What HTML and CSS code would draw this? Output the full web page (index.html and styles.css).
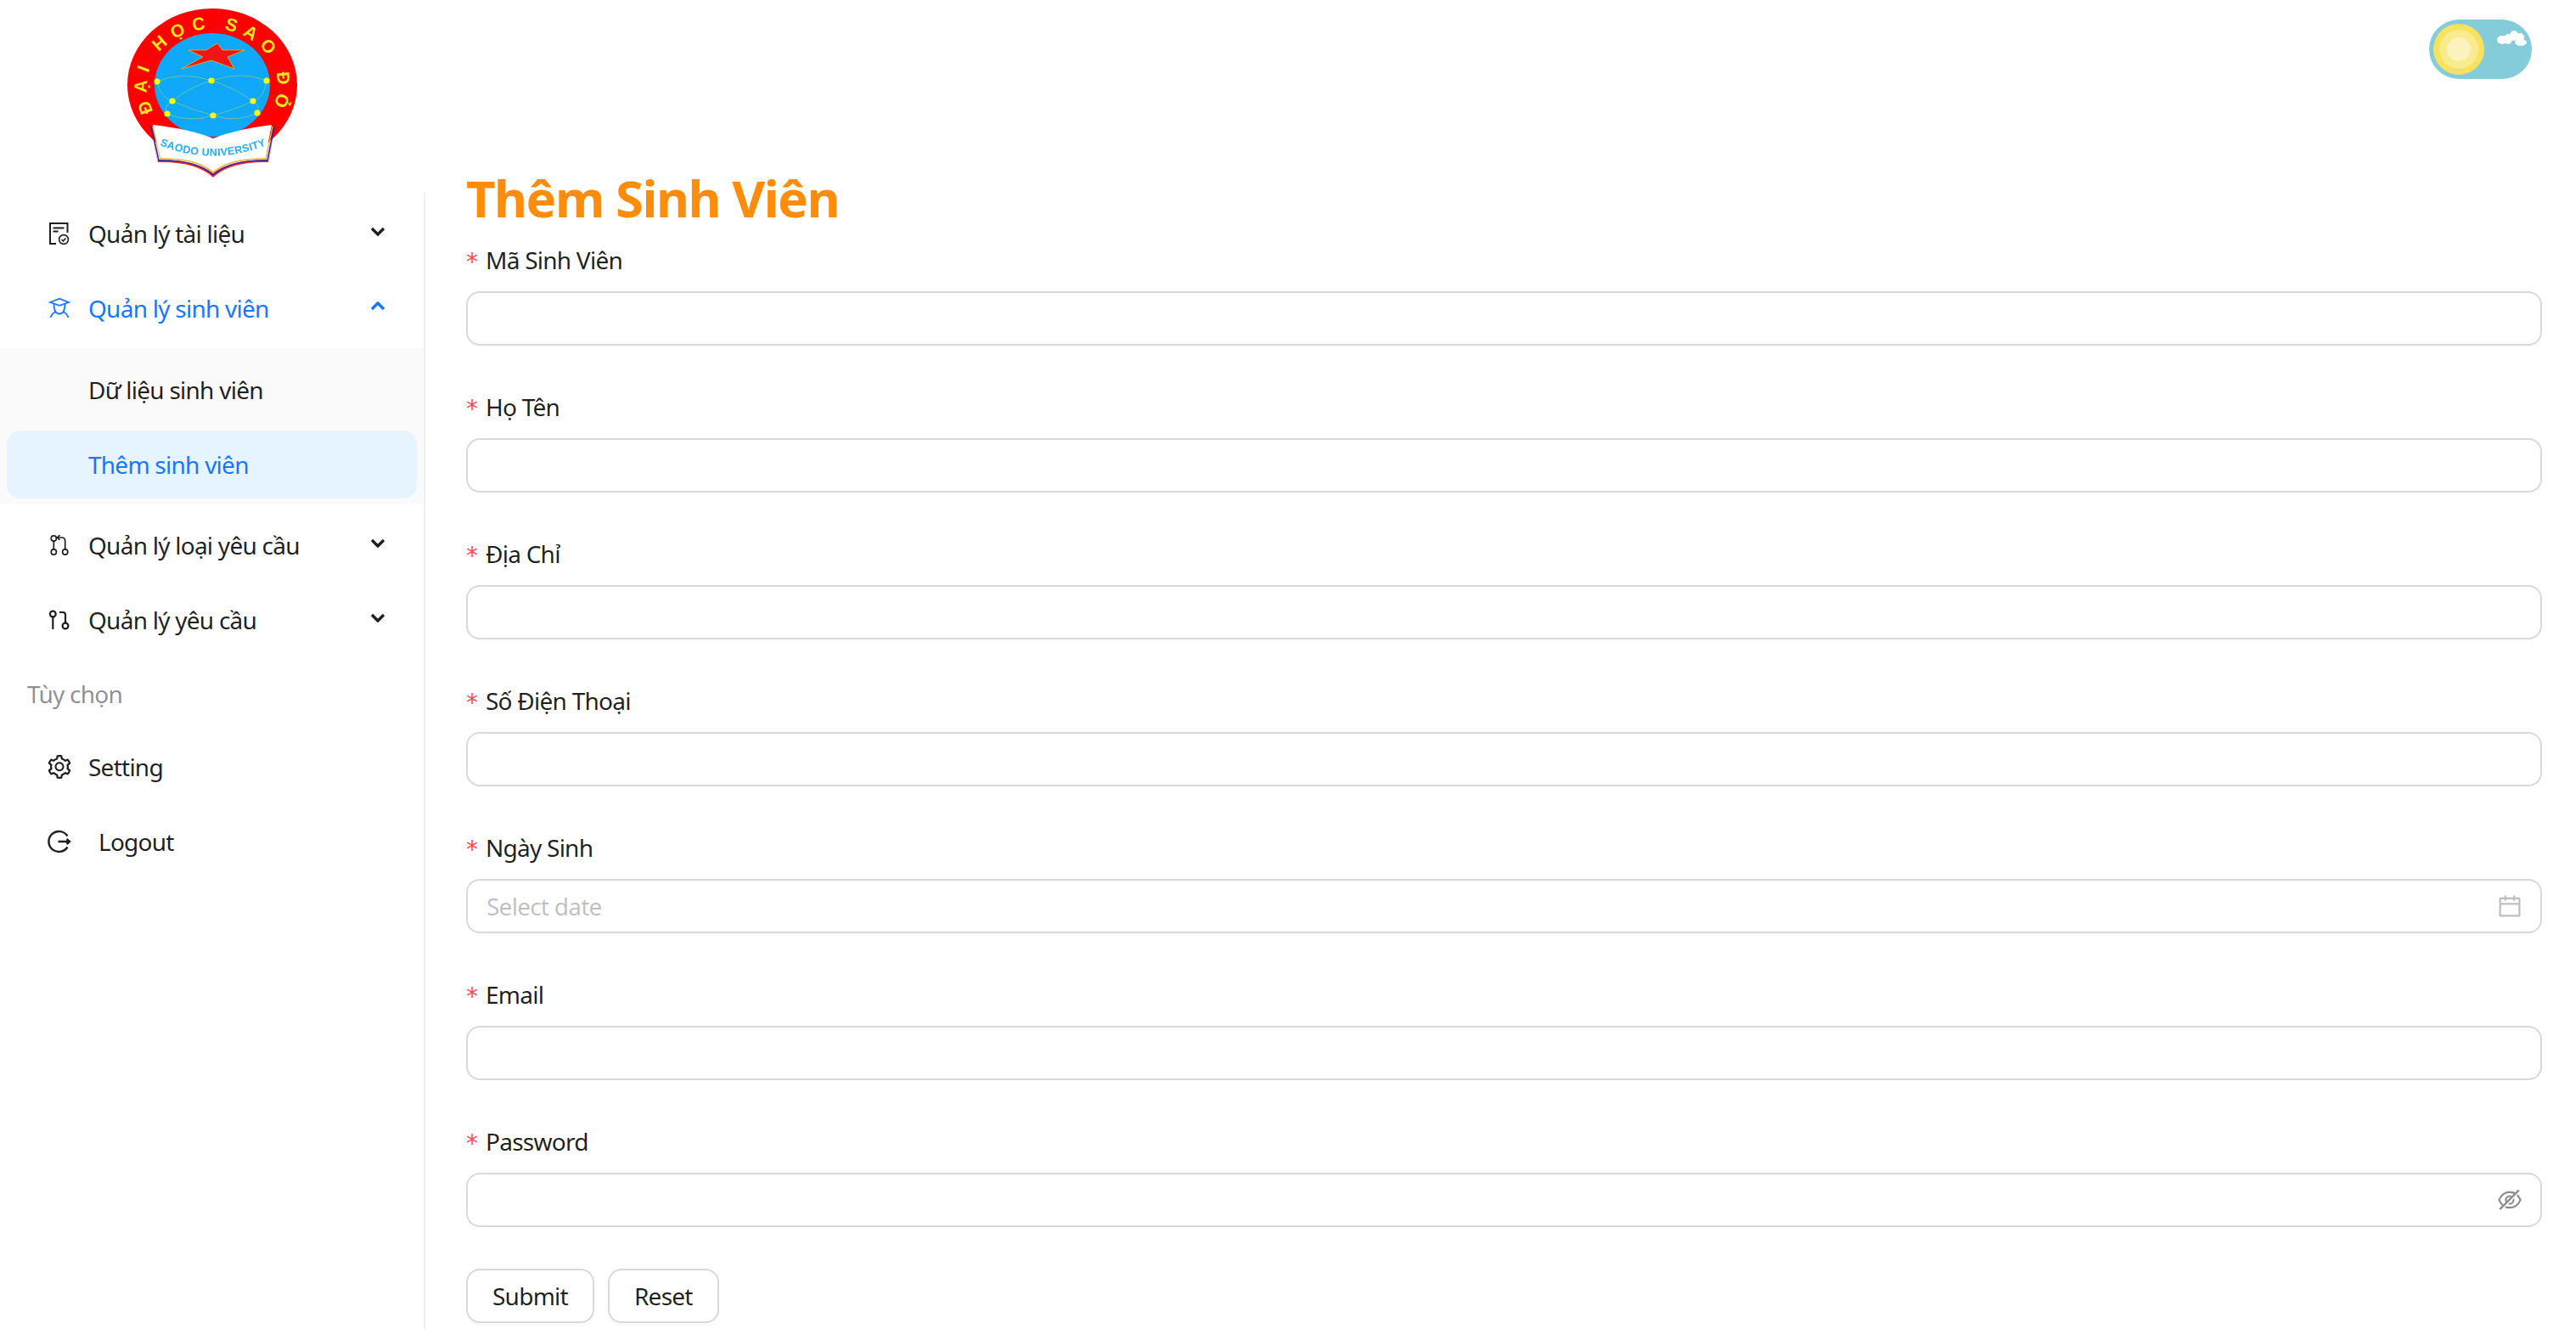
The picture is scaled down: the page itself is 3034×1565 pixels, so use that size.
FILE: index.html
```html
<!DOCTYPE html>
<html lang="en">
<head>
  <meta charset="UTF-8" />
  <title>Thêm Sinh Viên</title>
  <link rel="stylesheet" href="styles.css">
</head>
<body>

<div class="app">

  <!-- SIDEBAR -->
  <aside class="sidebar">
    <div class="logo-box">
      <svg class="logo" viewBox="150 8 204 204" width="204" height="204">
        <defs>
          <path id="ringPath" d="M184 134 A77 67 0 1 1 318 134" />
          <path id="bookPath" d="M189 171 Q252 196 315 171" />
        </defs>
        <ellipse cx="251" cy="100" rx="100" ry="90" fill="#ff0000" />
        <ellipse cx="251" cy="100" rx="68" ry="61" fill="#10a8fb" />
        <path d="M195 150 Q252 178 307 150 L252 168 Z" fill="#10a8fb" />
        <g fill="none" stroke="#6fcf9a" stroke-width="0.8">
          <path d="M186 96 Q215 83 250 95 Q285 83 315 95" />
          <path d="M186 96 Q190 115 204 119 Q228 130 252 136 Q276 130 299 119 Q312 115 315 95" />
          <path d="M250 95 Q225 102 204 119 Q192 126 198 134 Q225 145 252 136 Q280 145 304 133 Q308 126 299 119 Q275 102 250 95" />
        </g>
        <g fill="#ffff00">
          <circle cx="186" cy="96" r="3.6" />
          <circle cx="250" cy="95" r="3.6" />
          <circle cx="315" cy="95" r="3.6" />
          <circle cx="204" cy="119" r="3.6" />
          <circle cx="299" cy="119" r="3.6" />
          <circle cx="198" cy="134" r="3.6" />
          <circle cx="304" cy="133" r="3.6" />
          <circle cx="252" cy="136" r="3.6" />
        </g>
        <polygon points="257,51 263,59 289,59 269,67 277,81 250,71 215,81 240,67 223,59 244,59" fill="#f01414" stroke="#f5c518" stroke-width="0.7" />
        <text class="logo-ring"><textPath href="#ringPath" startOffset="50%" text-anchor="middle">ĐẠI HỌC SAO ĐỎ</textPath></text>
        <path d="M178 148 L187 191 Q232 190 252 209 Q272 190 317 191 L325 148 L318 188 Q272 188 252 204 Q232 188 186 188 Z" fill="#ff2a2a" />
        <path d="M179 149 L188 189 Q232 188 252 206 Q272 188 316 189 L324 149" fill="none" stroke="#2a2aa8" stroke-width="1.6" />
        <path d="M181 149 L190 187 Q232 186 252 203 Q272 186 314 187 L322 149" fill="none" stroke="#f0b030" stroke-width="1.4" />
        <path d="M181 147 Q225 152 252 163 Q280 152 321 147 L313 186 Q272 185 252 200 Q232 185 190 186 Z" fill="#ffffff" />
        <text class="logo-book"><textPath href="#bookPath" startOffset="50%" text-anchor="middle">SAODO UNIVERSITY</textPath></text>
      </svg>
    </div>

    <nav class="menu">
      <div class="menu-item">
        <svg class="menu-icon" viewBox="0 0 28 28" fill="none" stroke="currentColor" stroke-width="2">
          <path d="M10 26H3V2h20.5v11" />
          <path d="M6.5 7.5h13M6.5 11.5h6" />
          <circle cx="19" cy="21" r="5.4" stroke-width="1.6" />
          <path d="M16.6 21l1.8 2 3-3.6" stroke-width="1.6" />
        </svg>
        <span class="menu-text">Quản lý tài liệu</span>
        <svg class="chevron" viewBox="0 0 18 11" fill="none" stroke="currentColor" stroke-width="3.4"><path d="M2 2l7 7 7-7" /></svg>
      </div>

      <div class="menu-item open">
        <svg class="menu-icon" viewBox="0 0 28 28" fill="none" stroke="currentColor" stroke-width="1.8">
          <path d="M3 7l11-4.4L25 7l-11 3.8z" />
          <path d="M7.5 9c0 9 2.5 11.500 6.500 11.500S20.500 18 20.500 9" />
          <path d="M3.500 25c1-3.500 3-5.500 6-7M24.500 25c-1-3.500-3-5.500-6-7" />
        </svg>
        <span class="menu-text">Quản lý sinh viên</span>
        <svg class="chevron" viewBox="0 0 18 11" fill="none" stroke="currentColor" stroke-width="3.4"><path d="M2 9l7-7 7 7" /></svg>
      </div>

      <div class="submenu">
        <div class="menu-item sub">Dữ liệu sinh viên</div>
        <div class="menu-item sub active">Thêm sinh viên</div>
      </div>

      <div class="menu-item">
        <svg class="menu-icon" viewBox="0 0 28 28" fill="none" stroke="currentColor" stroke-width="1.700">
          <circle cx="7.300" cy="6" r="3.100" />
          <circle cx="7.300" cy="22" r="3.100" />
          <circle cx="20.700" cy="22" r="3.100" />
          <path d="M7.300 9v10M20.700 19V9q0-4-4-4h-5M14.500 2l-3 3 3 3" />
        </svg>
        <span class="menu-text">Quản lý loại yêu cầu</span>
        <svg class="chevron" viewBox="0 0 18 11" fill="none" stroke="currentColor" stroke-width="3.4"><path d="M2 2l7 7 7-7" /></svg>
      </div>

      <div class="menu-item">
        <svg class="menu-icon" viewBox="0 0 28 28" fill="none" stroke="currentColor" stroke-width="2.200">
          <circle cx="6.300" cy="7" r="3.400" />
          <path d="M6.300 10.500V25" />
          <circle cx="21" cy="21" r="3.400" />
          <path d="M21 17.500V8q0-3-3-3h-4" />
        </svg>
        <span class="menu-text">Quản lý yêu cầu</span>
        <svg class="chevron" viewBox="0 0 18 11" fill="none" stroke="currentColor" stroke-width="3.4"><path d="M2 2l7 7 7-7" /></svg>
      </div>

      <div class="menu-title">Tùy chọn</div>

      <div class="menu-item">
        <svg class="menu-icon" viewBox="64 64 896 896" fill="currentColor">
          <path d="M924.8 625.7l-65.5-56c3.1-19 4.7-38.4 4.7-57.8s-1.6-38.8-4.7-57.8l65.5-56a32.03 32.03 0 0 0 9.3-35.2l-.9-2.6a443.74 443.74 0 0 0-79.7-137.9l-1.8-2.1a32.12 32.12 0 0 0-35.1-9.5l-81.3 28.9c-30-24.6-63.5-44-99.7-57.6l-15.7-85a32.05 32.05 0 0 0-25.8-25.7l-2.7-.5c-52.1-9.4-106.9-9.4-159 0l-2.7.5a32.05 32.05 0 0 0-25.8 25.7l-15.8 85.4a351.86 351.86 0 0 0-99 57.4l-81.9-29.1a32 32 0 0 0-35.1 9.5l-1.8 2.1a446.02 446.02 0 0 0-79.7 137.9l-.9 2.6c-4.5 12.5-.8 26.5 9.3 35.2l66.3 56.6c-3.1 18.8-4.6 38-4.6 57.1 0 19.2 1.5 38.4 4.6 57.1L99 625.5a32.03 32.03 0 0 0-9.3 35.2l.9 2.6c18.1 50.4 44.9 96.9 79.7 137.9l1.8 2.1a32.12 32.12 0 0 0 35.1 9.5l81.9-29.1c29.8 24.5 63.1 43.9 99 57.4l15.8 85.4a32.05 32.05 0 0 0 25.8 25.7l2.7.5a449.4 449.4 0 0 0 159 0l2.7-.5a32.05 32.05 0 0 0 25.8-25.7l15.7-85a350 350 0 0 0 99.7-57.6l81.3 28.9a32 32 0 0 0 35.1-9.5l1.8-2.1c34.8-41.1 61.6-87.5 79.7-137.9l.9-2.6c4.5-12.3.8-26.3-9.3-35zM788.3 465.9c2.5 15.1 3.8 30.6 3.8 46.1s-1.3 31-3.8 46.1l-6.6 40.1 74.7 63.9a370.03 370.03 0 0 1-42.6 73.6L721 702.8l-31.4 25.8c-23.9 19.6-50.5 35-79.3 45.8l-38.1 14.3-17.9 97a377.5 377.5 0 0 1-85 0l-17.9-97.2-37.8-14.5c-28.5-10.8-55-26.2-78.7-45.7l-31.4-25.9-93.4 33.2c-17-22.9-31.2-47.6-42.6-73.6l75.5-64.5-6.5-40c-2.4-14.9-3.7-30.3-3.7-45.5 0-15.3 1.2-30.6 3.7-45.5l6.5-40-75.5-64.5c11.3-26.1 25.6-50.7 42.6-73.6l93.4 33.2 31.4-25.9c23.7-19.5 50.2-34.9 78.7-45.7l37.9-14.3 17.9-97.2c28.1-3.2 56.8-3.2 85 0l17.9 97 38.1 14.3c28.7 10.8 55.4 26.2 79.3 45.8l31.4 25.8 92.8-32.9c17 22.9 31.2 47.6 42.6 73.6L781.8 426l6.5 39.9zM512 326c-97.2 0-176 78.8-176 176s78.8 176 176 176 176-78.8 176-176-78.8-176-176-176zm79.2 255.2A111.6 111.6 0 0 1 512 614c-29.9 0-58-11.7-79.2-32.8A111.6 111.6 0 0 1 400 502c0-29.9 11.7-58 32.8-79.2C454 401.6 482.1 390 512 390c29.9 0 58 11.6 79.2 32.8A111.6 111.6 0 0 1 624 502c0 29.9-11.7 58-32.8 79.2z" />
        </svg>
        <span class="menu-text">Setting</span>
      </div>

      <div class="menu-item">
        <svg class="menu-icon" viewBox="0 0 28 28" fill="none" stroke="currentColor" stroke-width="2.400">
          <path d="M23.500 7.500A12 12 0 1 0 23.500 20.500" />
          <path d="M12.500 14H26M22.500 11l3.500 3-3.500 3" />
        </svg>
        <span class="menu-text logout">Logout</span>
      </div>
    </nav>
  </aside>

  <!-- MAIN -->
  <main class="content">
    <div class="topbar">
      <svg class="theme-toggle" viewBox="0 0 121 70" width="121" height="70">
        <rect width="121" height="70" rx="35" fill="#84ccda" />
        <circle cx="35" cy="35" r="30" fill="#fae15e" />
        <circle cx="35" cy="35" r="23" fill="#f8ec8f" />
        <circle cx="35" cy="35" r="14" fill="#fdf3bf" />
        <g fill="#ffffff">
          <ellipse cx="86" cy="24" rx="6" ry="5" />
          <ellipse cx="93" cy="23" rx="5" ry="6" />
          <ellipse cx="100" cy="19" rx="5" ry="6" />
          <ellipse cx="107" cy="21" rx="5" ry="5" />
          <ellipse cx="108" cy="27" rx="7" ry="4" />
        </g>
      </svg>
    </div>

    <h1 class="page-title">Thêm Sinh Viên</h1>

    <form class="student-form">
      <div class="form-item">
        <label class="form-label"><span class="req">*</span>Mã Sinh Viên</label>
        <div class="input-box"><input type="text" /></div>
      </div>
      <div class="form-item">
        <label class="form-label"><span class="req">*</span>Họ Tên</label>
        <div class="input-box"><input type="text" /></div>
      </div>
      <div class="form-item">
        <label class="form-label"><span class="req">*</span>Địa Chỉ</label>
        <div class="input-box"><input type="text" /></div>
      </div>
      <div class="form-item">
        <label class="form-label"><span class="req">*</span>Số Điện Thoại</label>
        <div class="input-box"><input type="text" /></div>
      </div>
      <div class="form-item">
        <label class="form-label"><span class="req">*</span>Ngày Sinh</label>
        <div class="input-box">
          <input type="text" placeholder="Select date" />
          <svg class="input-icon calendar" viewBox="64 64 896 896" fill="currentColor">
            <path d="M880 184H712v-64c0-4.4-3.6-8-8-8h-56c-4.4 0-8 3.6-8 8v64H384v-64c0-4.4-3.6-8-8-8h-56c-4.4 0-8 3.6-8 8v64H144c-17.7 0-32 14.3-32 32v664c0 17.7 14.3 32 32 32h736c17.7 0 32-14.3 32-32V216c0-17.7-14.3-32-32-32zm-40 656H184V460h656v380zM184 392V256h128v48c0 4.4 3.6 8 8 8h56c4.4 0 8-3.6 8-8v-48h256v48c0 4.4 3.6 8 8 8h56c4.4 0 8-3.6 8-8v-48h128v136H184z" />
          </svg>
        </div>
      </div>
      <div class="form-item">
        <label class="form-label"><span class="req">*</span>Email</label>
        <div class="input-box"><input type="text" /></div>
      </div>
      <div class="form-item">
        <label class="form-label"><span class="req">*</span>Password</label>
        <div class="input-box">
          <input type="password" />
          <svg class="input-icon eye" viewBox="64 64 896 896" fill="currentColor">
            <path d="M942.2 486.2Q889.47 375.11 816.7 305l-50.88 50.88C807.31 395.53 843.45 447.4 874.7 512 791.5 684.2 673.4 766 512 766q-72.67 0-133.87-22.38L323 798.75Q408 838 512 838q288.3 0 430.2-300.3a60.29 60.29 0 0 0 0-51.5zm-63.57-320.64L836 122.88a8 8 0 0 0-11.32 0L715.31 232.2Q624.86 186 512 186q-288.3 0-430.2 300.3a60.3 60.3 0 0 0 0 51.5q56.69 119.4 136.5 191.41L112.48 835a8 8 0 0 0 0 11.31L155.17 889a8 8 0 0 0 11.31 0l712.15-712.12a8 8 0 0 0 0-11.32zM149.3 512C232.6 339.8 350.7 258 512 258c54.54 0 104.13 9.36 149.12 28.39l-70.3 70.3a176 176 0 0 0-238.13 238.13l-83.42 83.42C223.1 637.49 183.3 582.28 149.3 512zm246.7 0a112.11 112.11 0 0 1 146.2-106.69L401.31 546.2A112 112 0 0 1 396 512z" />
            <path d="M508 624c-3.46 0-6.87-.16-10.25-.47l-52.82 52.82a176.09 176.09 0 0 0 227.42-227.42l-52.82 52.82c.31 3.38.47 6.79.47 10.25a111.94 111.94 0 0 1-112 112z" />
          </svg>
        </div>
      </div>

      <div class="form-buttons">
        <button type="button" class="btn btn-submit">Submit</button>
        <button type="reset" class="btn btn-reset">Reset</button>
      </div>
    </form>
  </main>

</div>

</body>
</html>
```

FILE: styles.css
```css
* {
  margin: 0;
  padding: 0;
  box-sizing: border-box;
}

body {
  font-family: "Noto Sans", "Open Sans", sans-serif;
  font-size: 28px;
  letter-spacing: -0.75px;
  color: rgba(0, 0, 0, 0.88);
  background: #fff;
  height: 100vh;
  overflow: hidden;
}

.app {
  display: flex;
  height: 100%;
}

/* Sidebar */
.sidebar {
  width: 501px;
  flex-shrink: 0;
  display: flex;
  flex-direction: column;
}

.logo-box {
  height: 226px;
  display: flex;
  justify-content: center;
  padding-top: 8px;
}

.logo {
  display: block;
  filter: blur(0.4px);
}

.logo-ring {
  font-family: "Liberation Sans", sans-serif;
  font-weight: bold;
  font-size: 21px;
  letter-spacing: 8px;
  fill: #ffe81a;
}

.logo-book {
  font-family: "Liberation Sans", sans-serif;
  font-weight: bold;
  font-size: 12.5px;
  letter-spacing: 0.3px;
  fill: #25aef5;
}

.menu {
  flex: 1;
  border-right: 2px solid #f0f0f0;
  padding-top: 9px;
}

.menu-item {
  height: 80px;
  display: flex;
  align-items: center;
  padding: 0 37px 0 56px;
  margin: 0 8px 8px 0;
  white-space: nowrap;
}

.menu-item.open {
  color: #1677ff;
  margin-bottom: 7px;
}

.menu-icon {
  width: 28px;
  height: 28px;
  flex-shrink: 0;
  margin-right: 20px;
}

.menu-text {
  flex: 1;
}

.menu-text.logout {
  margin-left: 12px;
}

.chevron {
  width: 18px;
  height: 11px;
  flex-shrink: 0;
  margin-top: -6px;
}

.submenu {
  background: #fafafa;
  padding: 9px 0 7px;
  margin-bottom: 8px;
}

.menu-item.sub {
  padding-left: 96px;
  margin-left: 8px;
}

.menu-item.sub:last-child {
  margin-bottom: 0;
}

.menu-item.active {
  background: #e6f4ff;
  color: #1677ff;
  border-radius: 16px;
}

.menu-title {
  height: 78px;
  line-height: 78px;
  padding-left: 32px;
  color: rgba(0, 0, 0, 0.45);
  margin-bottom: 7px;
}

/* Main area */
.content {
  flex: 1;
  padding: 0 40px 0 48px;
}

.topbar {
  display: flex;
  justify-content: flex-end;
  padding: 23px 12px 0 0;
}

.theme-toggle {
  display: block;
}

.page-title {
  font-size: 60px;
  line-height: 80px;
  font-weight: 700;
  letter-spacing: -1.5px;
  color: #ff8c0a;
  margin-top: 100px;
  margin-bottom: 11px;
}

.form-item {
  margin-bottom: 50px;
}

.form-label {
  display: flex;
  align-items: center;
  height: 44px;
  margin-bottom: 15px;
}

.req {
  width: 23px;
  flex-shrink: 0;
  font-family: "DejaVu Sans", sans-serif;
  font-size: 28px;
  line-height: 44px;
  padding-top: 6px;
  color: #ff4d4f;
}

.input-box {
  height: 64px;
  border: 2px solid #d9d9d9;
  border-radius: 16px;
  display: flex;
  align-items: center;
  padding: 0 22px;
  background: #fff;
}

.input-box input {
  flex: 1;
  border: none;
  outline: none;
  background: none;
  font: inherit;
  letter-spacing: inherit;
  color: inherit;
}

.input-box input::placeholder {
  color: rgba(0, 0, 0, 0.25);
}

.input-icon {
  width: 28px;
  height: 28px;
  flex-shrink: 0;
}

.input-icon.calendar {
  color: rgba(0, 0, 0, 0.25);
}

.input-icon.eye {
  color: rgba(0, 0, 0, 0.45);
}

.form-buttons {
  display: flex;
  gap: 16px;
  margin-top: -1px;
}

.btn {
  height: 64px;
  padding: 0 29px;
  border: 2px solid #d9d9d9;
  border-radius: 16px;
  background: #fff;
  font: inherit;
  letter-spacing: inherit;
  color: inherit;
  box-shadow: 0 4px 0 rgba(0, 0, 0, 0.02);
  cursor: pointer;
}
```
